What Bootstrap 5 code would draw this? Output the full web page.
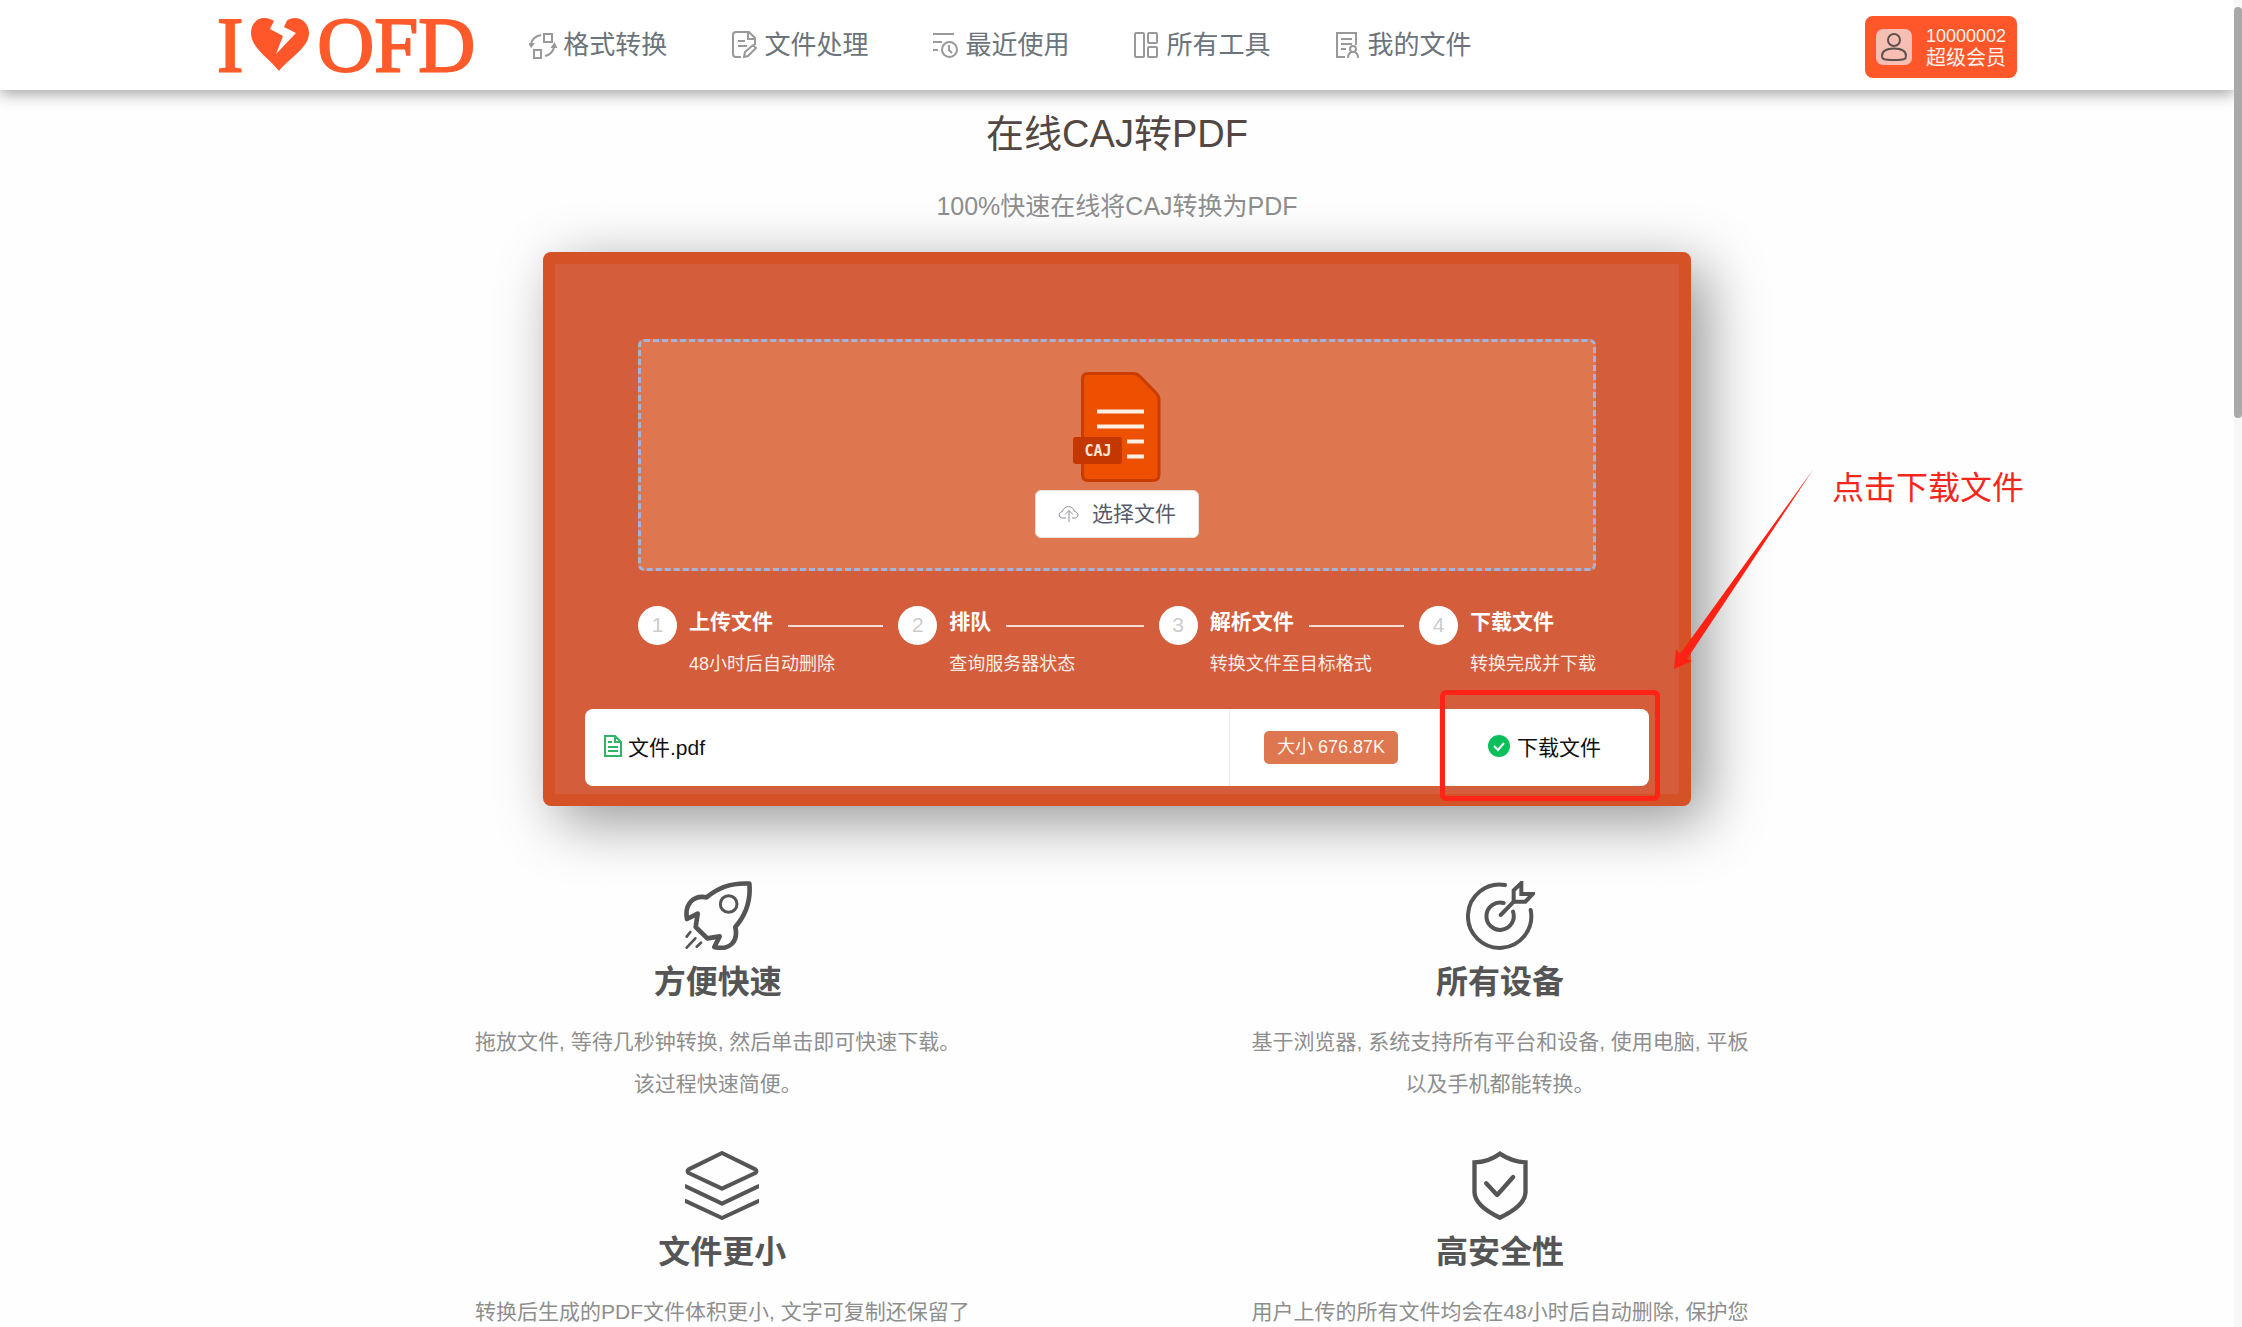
<!DOCTYPE html>
<html lang="zh-CN">
<head>
<meta charset="utf-8">
<meta name="viewport" content="width=device-width, initial-scale=1">
<title>在线CAJ转PDF</title>
<link href="https://cdn.jsdelivr.net/npm/bootstrap@5.3.0/dist/css/bootstrap.min.css" rel="stylesheet">
<style>
  body { font-family: "Liberation Sans", "Noto Sans CJK SC", sans-serif; font-size: 21px; background: #fefefe; height: 100vh; overflow: hidden; padding-right: 8px; }
  .scroll-track { width: 8px; background: #f7f7f7; padding-top: 7px; z-index: 1040; }
  .scroll-thumb { height: 31vh; background: #a9a9a9; border-radius: 4px; }
  .topbar { min-height: 90px; background: #fff; box-shadow: 0 4px 14px rgba(0,0,0,.36); z-index: 5; }
  .topbar-inner { max-width: 1800px; }
  .logo { font-family: "Liberation Serif", serif; font-size: 79px; line-height: 80px; color: #ff5a2b; gap: 8px; -webkit-text-stroke: 2px #ff5a2b; }
  .main-nav { gap: 63px; margin-left: 54px; }
  .main-nav .nav-item .nav-link { gap: 6px; font-size: 26px; line-height: 36px; color: #6b737b; padding: 0; }
  .main-nav svg { stroke: #999; stroke-width: 2; fill: none; }
  .member { background: #ff5729; color: #fff3ec; border: 0; border-radius: 8px; padding: 9px 11px; gap: 14px; line-height: 22px; text-align: left; margin-top: 4px; }
  .member:hover { background: #f04e22; color: #fff; }
  .member-id { font-size: 18px; }
  .member-level { font-size: 20px; }
  .avatar { width: 36px; height: 36px; background: #f7bfb3; border-radius: 7px; }
  .page-title { font-size: 38px; line-height: 46px; color: #524743; margin: 21px 0 34px; font-weight: 400; }
  .page-sub { font-size: 25px; line-height: 30px; color: #8e8e8e; margin-bottom: 31px; }
  .convert { max-width: 1148px; border: 12px solid #d45226; border-radius: 8px; background: #d45d3b; box-shadow: 15px 15px 60px rgba(0,0,0,.42); padding: 75px 30px 8px; }
  .convert-inner { padding: 0 53px; }
  .dropzone { border: 3px dashed #a2b3dc; border-radius: 6px; background: #de7650; padding: 30px; gap: 8px; }
  .pick { height: 48px; background: #fff; border-radius: 6px; border: 1px solid #eadfda; color: #565b6b; font-size: 21px; line-height: 30px; padding: 0 22px; gap: 12px; }
  .pick:hover { background: #fff6f2; }
  .steps { margin: 35px 0 30px; gap: 15px; color: #fff; }
  .step-no { width: 39px; height: 39px; background: #fff; color: #ccc; font-size: 21px; line-height: 38px; }
  .step-item { gap: 12px; }
  .step-title { font-size: 21px; line-height: 32px; font-weight: 700; gap: 15px; }
  .step-item:not(:last-child) .step-title::after { content: ""; flex: 1; height: 2px; background: #f6ddd5; align-self: flex-end; margin-bottom: 11px; }
  .step-desc { font-size: 18px; line-height: 30px; margin-top: 11px; color: #fbeee9; white-space: nowrap; }
  .file-row { background: #fff; border-radius: 8px; min-height: 77px; color: #111; }
  .file-name { padding-left: 18px; gap: 5px; }
  .cell-side { flex: 0 0 210px; border-left: 1px solid #ebebeb; }
  .size-cell { padding-left: 34px; }
  .size-tag { background: #de7650; color: #fff5ef; border-radius: 5px; font-size: 18px; line-height: 33px; padding: 0 13px; white-space: nowrap; }
  .download { color: #111; gap: 7px; }
  .hint-box { inset: -19px -11px -15px 0; border: 5px solid #ff2318; border-radius: 6px; pointer-events: none; }
  .hint-arrow { left: 1119px; top: 205px; }
  .hint-text { left: 1277px; top: 200px; font-size: 32px; line-height: 48px; color: #f5261c; white-space: nowrap; }
  .features { max-width: 1284px; padding-top: 75px; row-gap: 46px; }
  .feature-right { width: 518px; }
  .feature svg { display: block; margin: 0 auto 10px; height: 69px; stroke: #555; fill: none; stroke-linejoin: round; stroke-linecap: round; }
  .feature h2 { font-size: 32px; line-height: 44px; font-weight: 700; color: #555; margin-bottom: 17px; }
  .feature p { line-height: 42px; color: #8e8e8e; margin: 0; }
</style>
</head>
<body>
<header class="topbar navbar navbar-expand p-0 position-relative">
  <div class="topbar-inner w-100 mx-auto d-flex align-items-center">
    <a class="logo d-flex align-items-center text-decoration-none" href="#" aria-label="I love OFD">
      <span>I</span>
      <svg width="58" height="54" viewBox="0 0 58 54" fill="#ff5729"><path d="M28 53C18 40 0 30 0 15C0 6 6 0 13 0C17 0 20 1 23 3L19 11L32 18L25 36L45 15L33 9L36 2.5C38 1 41 0 44 0C52 0 58 7 58 15C58 30 38 40 28 53Z"/></svg>
      <span>OFD</span>
    </a>
    <ul class="main-nav navbar-nav">
      <li class="nav-item"><a class="nav-link d-flex align-items-center" href="#"><svg width="28" height="28" viewBox="0 0 28 28"><path d="M15 3h8v8h-8zM5 19h7v8H5zM12 4C6 5 2 9 2 14M16 25C21 24 25 20 25 15"/><path fill="#999" stroke="none" d="M-1 12h7l-4 5zM21.500 17h7l-3-6z"/></svg>格式转换</a></li>
      <li class="nav-item"><a class="nav-link d-flex align-items-center" href="#"><svg width="28" height="28" viewBox="0 0 28 28"><path d="M11 26H6q-3 0-3-3V4q0-3 3-3h13l6 6v7M18 1v7h7M8 10h7M8 15h9M14 26l1-5 8-7 3 3-8 8z"/></svg>文件处理</a></li>
      <li class="nav-item"><a class="nav-link d-flex align-items-center" href="#"><svg width="28" height="28" viewBox="0 0 28 28"><path d="M2 3h21M2 11h9M2 19h5"/><circle cx="18.500" cy="18.500" r="7.500"/><path d="M18 14v5l3 3"/></svg>最近使用</a></li>
      <li class="nav-item"><a class="nav-link d-flex align-items-center" href="#"><svg width="28" height="28" viewBox="0 0 28 28"><rect x="3" y="2" width="9" height="24" rx="1"/><rect x="16" y="2" width="9" height="10" rx="1"/><rect x="16" y="16" width="9" height="10" rx="1"/></svg>所有工具</a></li>
      <li class="nav-item"><a class="nav-link d-flex align-items-center" href="#"><svg width="28" height="28" viewBox="0 0 28 28"><path d="M12 26H4V2h19v12M8 8h11M8 13h11M8 18h5M15 27q0-6 5-6t5 6"/><circle cx="20" cy="18" r="3"/></svg>我的文件</a></li>
    </ul>
    <button class="member btn d-flex align-items-center ms-auto" type="button">
      <span class="avatar d-flex align-items-center justify-content-center"><svg width="28" height="30" viewBox="0 0 28 30" fill="none" stroke="#5f514d" stroke-width="2"><circle cx="14" cy="8" r="6"/><path d="M2 24C2 19 7 16.500 14 16.500S26 19 26 24C26 27 25 28 14 28S2 27 2 24Z"/></svg></span>
      <span><span class="member-id d-block">10000002</span><span class="member-level d-block">超级会员</span></span>
    </button>
  </div>
</header>

<main>
  <h1 class="page-title text-center">在线CAJ转PDF</h1>
  <p class="page-sub text-center">100%快速在线将CAJ转换为PDF</p>

  <section class="convert mx-auto position-relative">
    <div class="convert-inner">
      <div class="dropzone d-flex flex-column align-items-center">
        <svg width="88" height="110" viewBox="0 0 88 110"><path d="M15 1.500H60Q64 1.500 67 4.500L83 21Q86 24 86 28V102Q86 108.500 80 108.500H15Q9.500 108.500 9.500 103V7Q9.500 1.500 15 1.500Z" fill="#ec5000" stroke="#ca3d00" stroke-width="3"/><path d="M24 39.500H71M24 54.500H71M54 69.500H71M54 84.500H71" stroke="#fff0e6" stroke-width="4"/><rect y="65" width="49" height="27" rx="3" fill="#c43700"/><text x="25" y="84" text-anchor="middle" font-family="DejaVu Sans Mono, monospace" font-weight="700" font-size="15" fill="#ffe6d4">CAJ</text></svg>
        <button class="pick btn d-flex align-items-center" type="button"><svg width="22" height="18" viewBox="0 0 22 18" fill="none" stroke="#8b8d94" stroke-width="1"><path d="M8 13H5C0 13 0 7 4.500 6.500C6 0 15 0 16.500 6.500C21 7 21 13 17 13H14M11 17V6M7 9.500L11 5.500L15 9.500"/></svg>选择文件</button>
      </div>
      <div class="steps d-flex">
        <div class="step-item d-flex flex-fill w-25"><span class="step-no rounded-circle text-center flex-shrink-0">1</span><div class="flex-grow-1"><div class="step-title d-flex">上传文件</div><div class="step-desc">48小时后自动删除</div></div></div>
        <div class="step-item d-flex flex-fill w-25"><span class="step-no rounded-circle text-center flex-shrink-0">2</span><div class="flex-grow-1"><div class="step-title d-flex">排队</div><div class="step-desc">查询服务器状态</div></div></div>
        <div class="step-item d-flex flex-fill w-25"><span class="step-no rounded-circle text-center flex-shrink-0">3</span><div class="flex-grow-1"><div class="step-title d-flex">解析文件</div><div class="step-desc">转换文件至目标格式</div></div></div>
        <div class="step-item d-flex flex-shrink-0"><span class="step-no rounded-circle text-center flex-shrink-0">4</span><div><div class="step-title d-flex">下载文件</div><div class="step-desc">转换完成并下载</div></div></div>
      </div>
    </div>
    <div class="file-row d-flex align-items-stretch">
      <div class="file-name d-flex align-items-center flex-grow-1"><svg class="mb-1" width="20" height="24" viewBox="0 0 20 24" fill="none" stroke="#2fb566" stroke-width="2"><path d="M2 2H12L18 8V22H2ZM12 2V8H18M5 8H9M5 13H15M5 17H15"/></svg>文件.pdf</div>
      <div class="cell-side size-cell d-flex align-items-center"><span class="size-tag">大小 676.87K</span></div>
      <div class="cell-side d-flex align-items-center justify-content-center position-relative">
        <a class="download d-flex align-items-center text-decoration-none" href="#"><svg class="mb-1" width="22" height="22" viewBox="0 0 22 22"><circle cx="11" cy="11" r="11" fill="#0bbf5b"/><path d="M6 11L10 15L16 8" fill="none" stroke="#fff" stroke-width="2"/></svg>下载文件</a>
        <div class="hint-box position-absolute"></div>
      </div>
    </div>
    <svg class="hint-arrow position-absolute" width="140" height="201" viewBox="0 0 140 201"><path d="M139.500 0L13 190L18 192L0 200L2 180L6 185Z" fill="#ff2114"/></svg>
    <div class="hint-text position-absolute">点击下载文件</div>
  </section>

  <section class="features mx-auto d-grid">
    <div class="d-flex justify-content-between">
      <div class="feature text-center">
        <svg width="69" viewBox="0 0 207 207" stroke-width="14"><path d="M199 8C150 5 105 20 71 49C30 42 4 70 12 114L44 98L38 138L73 172L110 166L94 198C142 210 166 180 157 138C190 100 204 60 199 8Z"/><circle cx="137" cy="69" r="25" stroke-width="9"/><path stroke-width="8" d="M22 153L11 167M37 172L11 200M54 185L41 197"/></svg>
        <h2>方便快速</h2>
        <p>拖放文件, 等待几秒钟转换, 然后单击即可快速下载。<br>该过程快速简便。</p>
      </div>
      <div class="feature feature-right text-center px-2">
        <svg width="69" viewBox="0 0 207 207" stroke-width="12"><path d="M117 12A95 95 0 1 0 194 87"/><path d="M113 66A41 41 0 1 0 141 92M104 102L144 61"/><path stroke-linejoin="miter" d="M143 62V28L166 6V39H200L178 62Z"/></svg>
        <h2>所有设备</h2>
        <p>基于浏览器, 系统支持所有平台和设备, 使用电脑, 平板<br>以及手机都能转换。</p>
      </div>
    </div>
    <div class="d-flex justify-content-between">
      <div class="feature text-center">
        <svg width="74" viewBox="0 0 222 207" stroke-width="12"><path d="M111 6L211 55Q218 61 211 66L111 113L11 66Q4 61 11 55ZM2 106L111 158L220 106M2 150L111 201L220 150"/></svg>
        <h2>文件更小</h2>
        <p>转换后生成的PDF文件体积更小, 文字可复制还保留了</p>
      </div>
      <div class="feature feature-right text-center px-2">
        <svg width="56" viewBox="0 0 167 207" stroke-width="13"><path stroke-linejoin="miter" d="M83 8Q120 33 160 34V125Q158 165 83 200Q9 165 7 125V34Q50 33 83 8Z"/><path d="M42 97L75 132L123 78"/></svg>
        <h2>高安全性</h2>
        <p>用户上传的所有文件均会在48小时后自动删除, 保护您</p>
      </div>
    </div>
  </section>
</main>
<div class="scroll-track position-fixed top-0 end-0 vh-100" aria-hidden="true"><div class="scroll-thumb"></div></div>
<script src="https://cdn.jsdelivr.net/npm/bootstrap@5.3.0/dist/js/bootstrap.bundle.min.js"></script>
</body>
</html>
